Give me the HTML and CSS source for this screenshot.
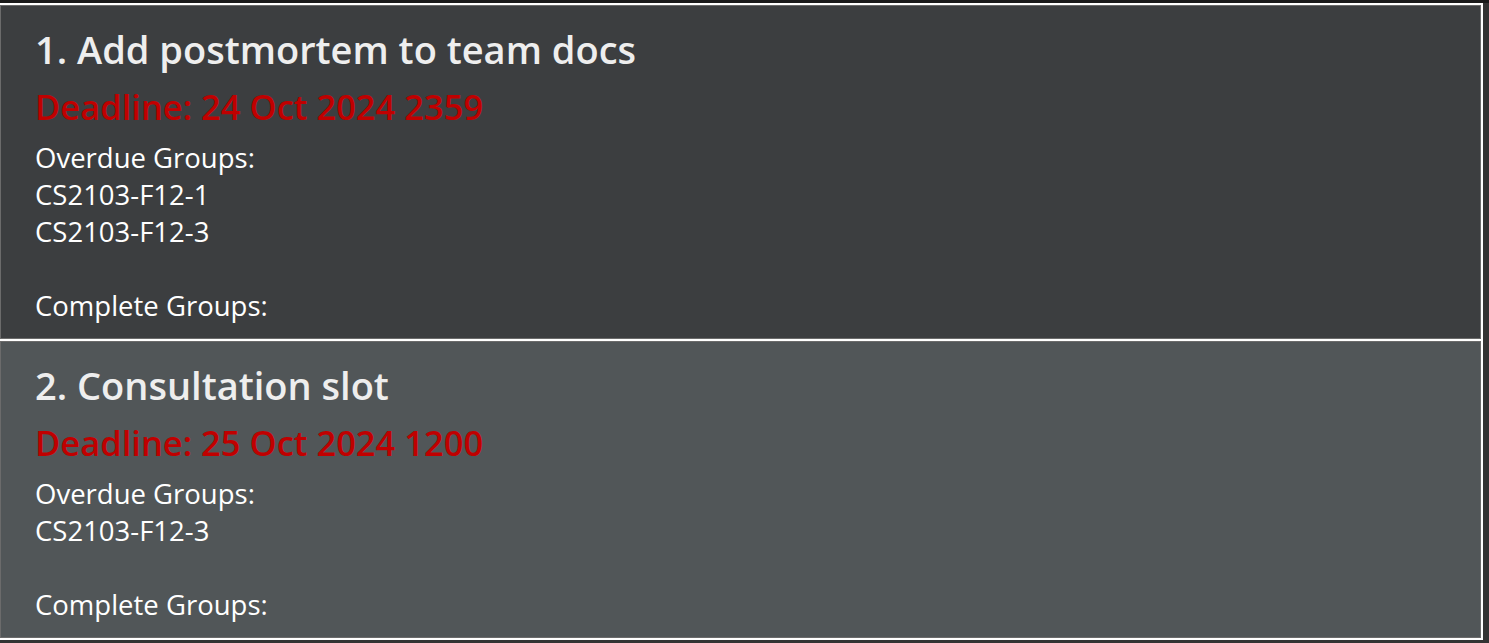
FILE: index.html
```html
<!DOCTYPE html>
<html>
<head>
<meta charset="utf-8">
<link rel="stylesheet" href="styles.css">
</head>
<body>
<div class="topstrip"></div>
<div class="list">
  <div class="cell cell-odd">
    <div class="title">1. Add postmortem to team docs</div>
    <div class="deadline">Deadline: 24 Oct 2024 2359</div>
    <div class="line">Overdue Groups:</div>
    <div class="line">CS2103-F12-1</div>
    <div class="line">CS2103-F12-3</div>
    <div class="line">&nbsp;</div>
    <div class="line">Complete Groups:</div>
  </div>
  <div class="cell cell-even">
    <div class="title">2. Consultation slot</div>
    <div class="deadline">Deadline: 25 Oct 2024 1200</div>
    <div class="line">Overdue Groups:</div>
    <div class="line">CS2103-F12-3</div>
    <div class="line">&nbsp;</div>
    <div class="line">Complete Groups:</div>
  </div>
</div>
</body>
</html>
```
FILE: styles.css
```css
html, body {
  margin: 0;
  padding: 0;
  background: #333333;
  height: 643px;
  overflow: hidden;
}
.topstrip {
  height: 3px;
  background: #1a1a1a;
}
.list {
  width: 1481px;
  background: #ffffff;
  padding: 2px 2px 2px 0;
  display: flex;
  flex-direction: column;
  gap: 2px;
}
.cell {
  border: 1px solid #6b6b6b;
  padding: 18px 0 14px 34px;
  font-family: "Open Sans", "Noto Sans", sans-serif;
}
.cell-odd { background: #3c3e40; }
.cell-even { background: #515658; }
.title {
  font-size: 38px;
  font-weight: 600;
  line-height: 50px;
  color: #eeeeee;
}
.deadline {
  font-size: 34.5px;
  font-weight: 600;
  line-height: 65px;
  color: #c00000;
}
.line {
  font-size: 27.5px;
  line-height: 37px;
  color: #ffffff;
}
```
